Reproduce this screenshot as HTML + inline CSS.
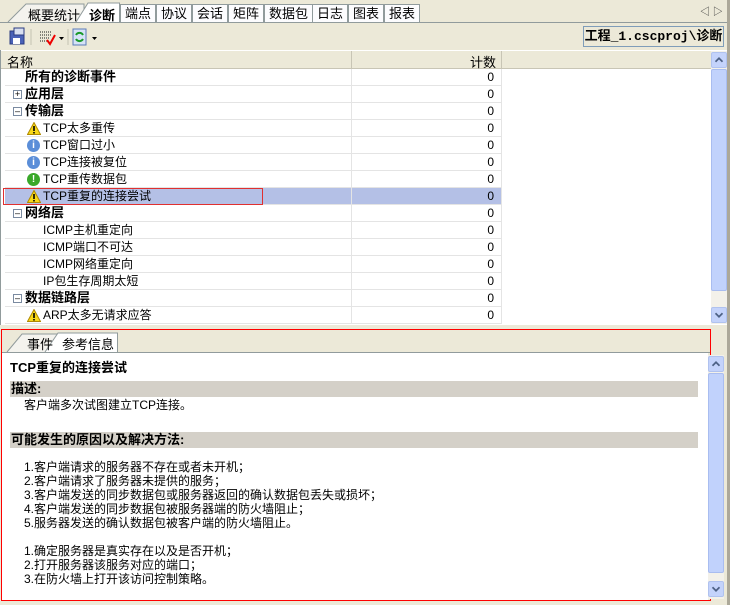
<!DOCTYPE html><html><head><meta charset="utf-8"><style>
*{margin:0;padding:0;box-sizing:border-box}
body{width:730px;height:605px;background:#ece9d8;font:12px "Liberation Sans","Noto Sans CJK SC",sans-serif;color:#000;position:relative;overflow:hidden}
.a{position:absolute}
.tab{position:absolute;top:4px;height:18px;border:1px solid #919b9c;border-bottom:none;background:#fcfcfe;padding:1px 4px 0;font-size:13px;line-height:16px;white-space:nowrap}
.row{position:absolute;left:5px;width:496px;height:17px;border-bottom:1px solid #e4e4e4;line-height:16px;font-size:12px}
.row .c{position:absolute;left:346px;top:0;width:150px;height:17px;border-left:1px solid #e4e4e4;text-align:right;padding-right:7px}
.b{font-weight:bold;font-size:13px}
.pm{position:absolute;top:4px;width:9px;height:9px;border:1px solid #7a8aa0;background:#fff;font-size:9px;line-height:6px;text-align:center;color:#000}
.sb{position:absolute;width:16px;background:#f3f1ea}
.btn{position:absolute;left:0;width:16px;height:16px;background:#c4d3fb;border:1px solid #b0c2ef;border-radius:2px}
.th{position:absolute;left:0;width:16px;background:#c1d2fc;border:1px solid #a9bdf0;border-radius:2px}
.band{position:absolute;left:10px;width:688px;height:16px;background:#d4d0c8;font-weight:bold;font-size:13px;line-height:16px;padding-left:1px}
.t{position:absolute;font-size:12px;line-height:14px;white-space:nowrap}
.w{position:absolute;left:22px;top:2px}
</style></head><body>
<svg width="0" height="0" style="position:absolute"><defs>
<symbol id="warn" viewBox="0 0 14 13"><path d="M7 0.5 L13.5 12.5 L0.5 12.5 Z" fill="#f8d818" stroke="#b08a00"/><rect x="6.2" y="4" width="1.6" height="5" fill="#000"/><rect x="6.2" y="10" width="1.6" height="1.5" fill="#000"/></symbol>
<symbol id="up" viewBox="0 0 16 16"><path d="M4 10 L8 6 L12 10" stroke="#4d6185" stroke-width="2" fill="none"/></symbol>
<symbol id="dn" viewBox="0 0 16 16"><path d="M4 6 L8 10 L12 6" stroke="#4d6185" stroke-width="2" fill="none"/></symbol>
</defs></svg>
<!-- top tabs -->
<div class="a" style="left:0;top:22px;width:730px;height:1px;background:#919b9c"></div>
<svg class="a" style="left:0;top:0" width="730" height="24"><path d="M8 22 L26 4 L84 4 L84 22" fill="#f4f3ee" stroke="#919b9c"/><path d="M76 22 L88 3 L119.5 3 L119.5 22" fill="#fff" stroke="#919b9c"/></svg>
<div class="a" style="left:28px;top:5px;font-size:13px">概要统计</div>
<div class="a b" style="left:89px;top:5px;font-size:13px">诊断</div>
<div class="tab" style="left:120px">端点</div>
<div class="tab" style="left:156px">协议</div>
<div class="tab" style="left:192px">会话</div>
<div class="tab" style="left:228px">矩阵</div>
<div class="tab" style="left:264px">数据包</div>
<div class="tab" style="left:312px">日志</div>
<div class="tab" style="left:348px">图表</div>
<div class="tab" style="left:384px">报表</div>
<div class="a" style="left:700px;top:3px;font-size:10px;color:#333">◁ ▷</div>
<!-- toolbar -->
<svg class="a" style="left:8px;top:26px" width="100" height="22">
<rect x="2" y="5" width="14" height="13" fill="#4a62b8" stroke="#2a3a80"/><rect x="6" y="2" width="10" height="7" fill="#d8dff0" stroke="#2a3a80"/><rect x="5" y="12" width="7" height="6" fill="#fff"/>
<line x1="23" y1="3" x2="23" y2="19" stroke="#c5c2b2"/>
<g stroke="#1a1a1a" stroke-dasharray="1 1"><line x1="32" y1="6" x2="44" y2="6"/><line x1="32" y1="9" x2="44" y2="9"/><line x1="32" y1="12" x2="42" y2="12"/><line x1="32" y1="15" x2="40" y2="15"/></g>
<path d="M39 14 L42 18 L47 9" stroke="#e00" stroke-width="2" fill="none"/><path d="M51 11 l5 0 l-2.5 3z" fill="#000"/>
<line x1="60" y1="3" x2="60" y2="19" stroke="#c5c2b2"/>
<rect x="65" y="3" width="13" height="16" fill="#d6e3f6" stroke="#5b7bb8"/><path d="M68 9 a4 4 0 0 1 7 0 M75 13 a4 4 0 0 1 -7 0" stroke="#1a9a2a" stroke-width="2" fill="none"/>
<path d="M84 11 l5 0 l-2.5 3z" fill="#000"/></svg>
<div class="a b" style="left:583px;top:26px;width:141px;height:21px;border:1px solid #7f9db9;background:#ece9d8;line-height:19px;text-align:center;font-family:'Liberation Mono','Noto Sans CJK SC',monospace">工程_1.cscproj\诊断</div>
<!-- list -->
<div class="a" style="left:0;top:50px;width:727px;height:275px;background:#fff;border-left:1px solid #919b9c"></div>
<div class="a" style="left:1px;top:51px;width:710px;height:18px;background:#ece9d8;border-bottom:1px solid #c8c5b5"></div>
<div class="a" style="left:351px;top:51px;width:1px;height:18px;background:#c8c5b5"></div>
<div class="a" style="left:501px;top:51px;width:1px;height:18px;background:#c8c5b5"></div>
<div class="a" style="left:7px;top:52px;font-size:13px">名称</div>
<div class="a" style="left:470px;top:52px;font-size:13px">计数</div>
<div class="row" style="top:69px"><span class="b" style="position:absolute;left:20px">所有的诊断事件</span><div class="c">0</div></div>
<div class="row" style="top:86px"><div class="pm" style="left:8px">+</div><span class="b" style="position:absolute;left:20px">应用层</span><div class="c">0</div></div>
<div class="row" style="top:103px"><div class="pm" style="left:8px">–</div><span class="b" style="position:absolute;left:20px">传输层</span><div class="c">0</div></div>
<div class="row" style="top:120px"><svg class="w" width="14" height="13"><use href="#warn"/></svg><span class="a" style="left:38px">TCP太多重传</span><div class="c">0</div></div>
<div class="row" style="top:137px"><span class="a" style="left:22px;top:2px;width:13px;height:13px;border-radius:7px;background:#5b8ed8;color:#fff;font-size:10px;line-height:13px;text-align:center;font-weight:bold">i</span><span class="a" style="left:38px">TCP窗口过小</span><div class="c">0</div></div>
<div class="row" style="top:154px"><span class="a" style="left:22px;top:2px;width:13px;height:13px;border-radius:7px;background:#5b8ed8;color:#fff;font-size:10px;line-height:13px;text-align:center;font-weight:bold">i</span><span class="a" style="left:38px">TCP连接被复位</span><div class="c">0</div></div>
<div class="row" style="top:171px"><span class="a" style="left:22px;top:2px;width:13px;height:13px;border-radius:7px;background:#3aa82a;color:#fff;font-size:10px;line-height:13px;text-align:center;font-weight:bold">!</span><span class="a" style="left:38px">TCP重传数据包</span><div class="c">0</div></div>
<div class="row" style="top:188px;background:#b4c0e6"><div class="a" style="left:-2px;top:0;width:260px;height:17px;border:1px solid #e03030"></div><svg class="w" width="14" height="13"><use href="#warn"/></svg><span class="a" style="left:38px">TCP重复的连接尝试</span><div class="c">0</div></div>
<div class="row" style="top:205px"><div class="pm" style="left:8px">–</div><span class="b" style="position:absolute;left:20px">网络层</span><div class="c">0</div></div>
<div class="row" style="top:222px"><span class="a" style="left:38px">ICMP主机重定向</span><div class="c">0</div></div>
<div class="row" style="top:239px"><span class="a" style="left:38px">ICMP端口不可达</span><div class="c">0</div></div>
<div class="row" style="top:256px"><span class="a" style="left:38px">ICMP网络重定向</span><div class="c">0</div></div>
<div class="row" style="top:273px"><span class="a" style="left:38px">IP包生存周期太短</span><div class="c">0</div></div>
<div class="row" style="top:290px"><div class="pm" style="left:8px">–</div><span class="b" style="position:absolute;left:20px">数据链路层</span><div class="c">0</div></div>
<div class="row" style="top:307px"><svg class="w" width="14" height="13"><use href="#warn"/></svg><span class="a" style="left:38px">ARP太多无请求应答</span><div class="c">0</div></div>
<div class="a" style="left:501px;top:69px;width:1px;height:255px;background:#e4e4e4"></div>
<div class="sb" style="left:711px;top:51px;height:273px"><div class="btn" style="top:1px"><svg width="14" height="14"><use href="#up"/></svg></div><div class="th" style="top:18px;height:222px"></div><div class="btn" style="top:256px"><svg width="14" height="14"><use href="#dn"/></svg></div></div>
<div class="a" style="left:727px;top:0;width:3px;height:605px;background:#aca899"></div>
<!-- bottom panel -->
<div class="a" style="left:1px;top:329px;width:710px;height:272px;border:1px solid #f00"></div>
<div class="a" style="left:2px;top:352px;width:708px;height:1px;background:#919b9c"></div>
<svg class="a" style="left:0;top:330px" width="130" height="23"><path d="M7 22 L22 4 L62 4 L57 22" fill="#f4f3ee" stroke="#919b9c"/><path d="M45 22 L58 3 L117.5 3 L117.5 22" fill="#fff" stroke="#919b9c"/></svg>
<div class="a" style="left:27px;top:334px;font-size:13px">事件</div>
<div class="a" style="left:62px;top:334px;font-size:13px">参考信息</div>
<div class="a" style="left:2px;top:353px;width:706px;height:247px;background:#fff"></div>
<div class="sb" style="left:708px;top:355px;height:244px"><div class="btn" style="top:1px"><svg width="14" height="14"><use href="#up"/></svg></div><div class="th" style="top:18px;height:200px"></div><div class="btn" style="top:226px"><svg width="14" height="14"><use href="#dn"/></svg></div></div>
<div class="t b" style="left:10px;top:361px;font-size:13px">TCP重复的连接尝试</div>
<div class="band" style="top:381px">描述:</div>
<div class="t" style="left:24px;top:398px">客户端多次试图建立TCP连接。</div>
<div class="band" style="top:432px">可能发生的原因以及解决方法:</div>
<div class="t" style="left:24px;top:460px">1.客户端请求的服务器不存在或者未开机；<br>2.客户端请求了服务器未提供的服务；<br>3.客户端发送的同步数据包或服务器返回的确认数据包丢失或损坏；<br>4.客户端发送的同步数据包被服务器端的防火墙阻止；<br>5.服务器发送的确认数据包被客户端的防火墙阻止。</div>
<div class="t" style="left:24px;top:544px">1.确定服务器是真实存在以及是否开机；<br>2.打开服务器该服务对应的端口；<br>3.在防火墙上打开该访问控制策略。</div>
</body></html>
